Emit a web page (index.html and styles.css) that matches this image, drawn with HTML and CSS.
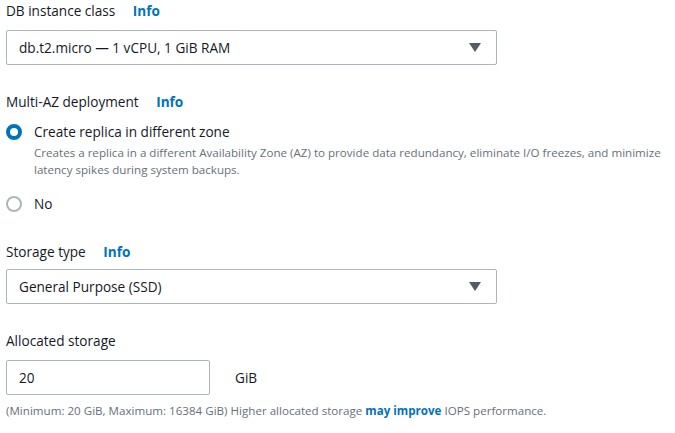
FILE: index.html
```html
<!DOCTYPE html>
<html>
<head>
<meta charset="utf-8">
<link rel="stylesheet" href="styles.css">
</head>
<body>
<div class="form">
  <div class="field">
    <div class="label">DB instance class <a class="info">Info</a></div>
    <div class="select"><span>db.t2.micro — 1 vCPU, 1 GiB RAM</span><span class="caret"></span></div>
  </div>
  <div class="field multi">
    <div class="label">Multi-AZ deployment <a class="info">Info</a></div>
    <div class="radio-row">
      <span class="radio checked"></span>
      <div class="radio-text">
        <div class="radio-label">Create replica in different zone</div>
        <div class="radio-desc">Creates a replica in a different Availability Zone (AZ) to provide data redundancy, eliminate I/O freezes, and minimize latency spikes during system backups.</div>
      </div>
    </div>
    <div class="radio-row no">
      <span class="radio"></span>
      <div class="radio-text"><div class="radio-label">No</div></div>
    </div>
  </div>
  <div class="field storage">
    <div class="label">Storage type <a class="info">Info</a></div>
    <div class="select"><span>General Purpose (SSD)</span><span class="caret"></span></div>
  </div>
  <div class="field">
    <div class="label">Allocated storage</div>
    <div class="input-row">
      <div class="input">20</div>
      <span class="unit">GiB</span>
    </div>
    <div class="hint">(Minimum: 20 GiB, Maximum: 16384 GiB) Higher allocated storage <b class="link">may improve</b> IOPS performance.</div>
  </div>
</div>
</body>
</html>
```
FILE: styles.css
```css
* { box-sizing: border-box; }
body {
  margin: 0;
  background: #fff;
  font-family: "Open Sans", "Noto Sans", sans-serif;
  color: #16191f;
  font-size: 13.6px;
}
.form {
  padding: 2px 0 0 6px;
  width: 675px;
}
.field { margin-bottom: 28px; }
.label {
  font-size: 13.6px;
  line-height: 18px;
  color: #16191f;
  margin-bottom: 10px;
}
.info {
  color: #0073bb;
  font-weight: 700;
  margin-left: 14px;
}
.select {
  width: 491px;
  height: 35px;
  border: 1px solid #aab7b8;
  border-radius: 2px;
  display: flex;
  align-items: center;
  justify-content: space-between;
  padding: 0 15px 0 12px;
}
.caret {
  width: 0; height: 0;
  border-left: 6px solid transparent;
  border-right: 6px solid transparent;
  border-top: 9px solid #545b64;
}
.multi { margin-bottom: 29px; }
.multi .label { margin-bottom: 11px; }
.storage .label { margin-bottom: 8px; }
.radio-row {
  display: flex;
  align-items: flex-start;
  gap: 12px;
}
.radio-row.no { margin-top: 16px; }
.radio {
  width: 16px; height: 16px;
  border-radius: 50%;
  border: 2px solid #aab7b8;
  margin-top: 2px;
  flex: none;
}
.radio.checked {
  border: 4px solid #0073bb;
}
.radio-label { line-height: 20px; }
.radio-desc {
  font-size: 11.6px;
  line-height: 17px;
  color: #687078;
  margin-top: 2px;
  width: 636px;
}
.input-row {
  display: flex;
  align-items: center;
}
.input {
  width: 204px;
  height: 35px;
  border: 1px solid #aab7b8;
  border-radius: 2px;
  padding: 0 12px;
  display: flex;
  align-items: center;
}
.unit { margin-left: 25px; }
.hint {
  font-size: 11.6px;
  color: #687078;
  margin-top: 7px;
  line-height: 17px;
}
.link { color: #0073bb; font-weight: 700; }
```
